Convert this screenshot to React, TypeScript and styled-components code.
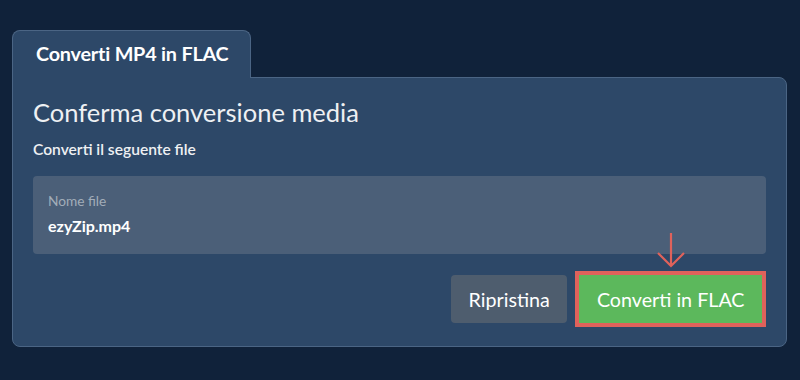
import styled, { createGlobalStyle } from "styled-components";

const GlobalStyle = createGlobalStyle`
  html, body {
    margin: 0;
    padding: 0;
    background: #10223a;
    font-family: Lato, "Noto Sans", sans-serif;
  }
`;

const Page = styled.div`
  width: 800px;
  height: 380px;
  box-sizing: border-box;
  padding: 30px 13px 0 12px;
`;

const Tab = styled.div`
  position: relative;
  z-index: 1;
  display: inline-flex;
  align-items: center;
  box-sizing: border-box;
  width: 239px;
  height: 48px;
  margin-bottom: -1px;
  padding: 0 0 4px 23px;
  background: #2d4868;
  border: 1px solid #4b6584;
  border-bottom: none;
  border-radius: 8px 8px 0 0;
  color: #ffffff;
  font-size: 19.8px;
  font-weight: 700;
  letter-spacing: -0.2px;
`;

const Panel = styled.section`
  box-sizing: border-box;
  background: #2d4868;
  border: 1px solid #4b6584;
  border-radius: 0 8px 8px 8px;
  padding: 19px 20px 23px 20px;
`;

const Title = styled.h1`
  margin: 0;
  color: #eef0f3;
  font-size: 25.5px;
  font-weight: 400;
  line-height: 30px;
`;

const Subtitle = styled.p`
  margin: 12px 0 0;
  color: #eef0f3;
  font-size: 15.6px;
  font-weight: 600;
  line-height: 20px;
`;

const Field = styled.div`
  margin-top: 17px;
  height: 78px;
  box-sizing: border-box;
  padding: 16px 15px;
  background: #4b5f78;
  border-radius: 4px;
`;

const FieldLabel = styled.div`
  color: #a2adb9;
  font-size: 13.7px;
  line-height: 18px;
`;

const FieldValue = styled.div`
  margin-top: 6px;
  color: #ffffff;
  font-size: 16px;
  font-weight: 700;
  line-height: 20px;
`;

const Actions = styled.div`
  display: flex;
  justify-content: flex-end;
  gap: 12px;
  margin-top: 21px;
  padding-right: 4px;
`;

const Button = styled.button<{ $primary?: boolean }>`
  position: relative;
  height: 48px;
  padding: 0 17.5px;
  border: none;
  border-radius: ${(p) => (p.$primary ? "0" : "4px")};
  background: ${(p) => (p.$primary ? "#5cb85c" : "#4e5d6e")};
  color: #ffffff;
  font-family: Lato, "Noto Sans", sans-serif;
  font-size: 19.7px;
  font-weight: 400;
  outline: ${(p) => (p.$primary ? "4px solid #df625b" : "none")};
`;

const Pointer = styled.svg`
  position: absolute;
  left: 50%;
  top: -42px;
  transform: translateX(-50%);
`;

const App = () => {
  return (
    <>
      <GlobalStyle />
      <Page>
        <Tab>Converti MP4 in FLAC</Tab>
        <Panel>
          <Title>Conferma conversione media</Title>
          <Subtitle>Converti il seguente file</Subtitle>
          <Field>
            <FieldLabel>Nome file</FieldLabel>
            <FieldValue>ezyZip.mp4</FieldValue>
          </Field>
          <Actions>
            <Button>Ripristina</Button>
            <Button $primary>
              <Pointer width="30" height="36" viewBox="0 0 30 36">
                <path
                  d="M15 0 V33 M2 20 L15 33 L28 20"
                  fill="none"
                  stroke="#df625b"
                  strokeWidth="2.2"
                />
              </Pointer>
              Converti in FLAC
            </Button>
          </Actions>
        </Panel>
      </Page>
    </>
  );
};

export default App;
